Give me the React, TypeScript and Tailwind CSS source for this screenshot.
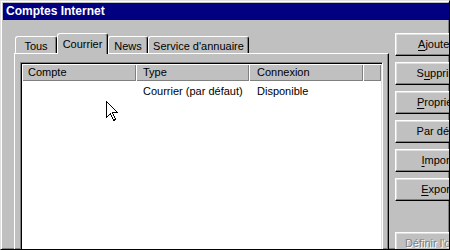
const raised =
	'bg-[#c0c0c0] border border-white border-r-black border-b-black shadow-[inset_-1px_-1px_0_#808080,inset_1px_1px_0_#dfdfdf]';

const tabBase =
	'flex justify-center bg-[#c0c0c0] border-t border-l border-r border-white border-r-black shadow-[inset_-1px_0_0_#808080] rounded-t-[3px] text-[11px] leading-[13px]';

const headCell =
	'h-[17px] shrink-0 bg-[#c0c0c0] shadow-[inset_1px_1px_0_#fff,inset_-1px_-1px_0_#808080] text-[11px] leading-[17px]';

const Button = ({ children, disabled }: { children: React.ReactNode; disabled?: boolean }) => (
	<div
		className={`${raised} w-[94px] h-[23px] shrink-0 flex items-center justify-center text-[11px] ${
			disabled ? 'text-[#808080] [text-shadow:1px_1px_0_#fff]' : 'text-black'
		}`}
	>
		{children}
	</div>
);

const U = ({ children }: { children: React.ReactNode }) => (
	<span className="underline underline-offset-[2px]">{children}</span>
);

export default function App() {
	return (
		<div className="relative w-[450px] h-[250px] overflow-hidden bg-[#c0c0c0] border border-[#dfdfdf] border-r-black border-b-black shadow-[inset_1px_1px_0_#fff,inset_-1px_-1px_0_#808080] p-[2px] font-['Liberation_Sans',Arial,sans-serif] text-black">
			{/* title bar */}
			<div className="h-[17px] mr-[-2px] bg-[#000080] text-white font-bold text-[12px] leading-[17px] pl-[3px]">
				Comptes Internet
			</div>

			<div className="flex mt-[13px] ml-[11px]">
				{/* tabs + panel */}
				<div className="w-[375px] shrink-0 flex flex-col">
					<div className="flex items-end h-[20px] pl-[1px]">
						<div className={`${tabBase} w-[42px] h-[17px] pt-[3px]`}>Tous</div>
						<div className={`${tabBase} relative z-10 w-[51px] h-[21px] mb-[-1px] pt-[4px]`}>Courrier</div>
						<div className={`${tabBase} w-[40px] h-[17px] pt-[3px]`}>News</div>
						<div className={`${tabBase} w-[101px] h-[17px] pt-[3px]`}>Service d'annuaire</div>
					</div>
					<div className="h-[200px] border border-white border-r-black border-b-black shadow-[inset_-1px_-1px_0_#808080] pt-[8px] pl-[5px]">
						<div className="w-[363px] h-[200px] bg-white border border-[#808080] border-r-white border-b-white shadow-[inset_1px_1px_0_#000,inset_-1px_-1px_0_#dfdfdf] p-[1px]">
							<div className="flex">
								<div className={`${headCell} w-[114px] pl-[6px]`}>Compte</div>
								<div className={`${headCell} w-[113px] pl-[7px]`}>Type</div>
								<div className={`${headCell} w-[114px] pl-[8px]`}>Connexion</div>
								<div className={`${headCell} w-[18px]`} />
							</div>
							<div className="flex pt-[2px] text-[11px] leading-[16px]">
								<div className="w-[114px] shrink-0" />
								<div className="w-[113px] shrink-0 pl-[7px]">Courrier (par défaut)</div>
								<div className="w-[114px] shrink-0 pl-[8px]">Disponible</div>
							</div>
						</div>
					</div>
				</div>

				{/* buttons */}
				<div className="flex flex-col gap-[6px] ml-[6px]">
					<Button>
						<span>
							<U>A</U>jouter
						</span>
						<span className="ml-[9px] w-0 h-0 border-y-[4px] border-y-transparent border-l-[4px] border-l-black" />
					</Button>
					<Button>
						S<U>u</U>pprimer
					</Button>
					<Button>
						<U>P</U>ropriétés
					</Button>
					<Button>Par défaut</Button>
					<Button>
						<U>I</U>mporter
					</Button>
					<Button>
						<U>E</U>xporter
					</Button>
					<div className="mt-[25px]">
						<Button disabled>Définir l'ordre...</Button>
					</div>
				</div>
			</div>

			{/* mouse pointer */}
			<svg
				className="absolute left-[105px] top-[100px]"
				width="13"
				height="21"
				viewBox="0 0 13 21"
				shapeRendering="crispEdges"
			>
				<polygon
					points="0.5,0.5 0.5,16.5 4.5,12.5 7.5,19.5 9.5,18.5 6.5,11.5 11.5,11.5"
					fill="#fff"
					stroke="#000"
					strokeWidth="1"
				/>
			</svg>
		</div>
	);
}
